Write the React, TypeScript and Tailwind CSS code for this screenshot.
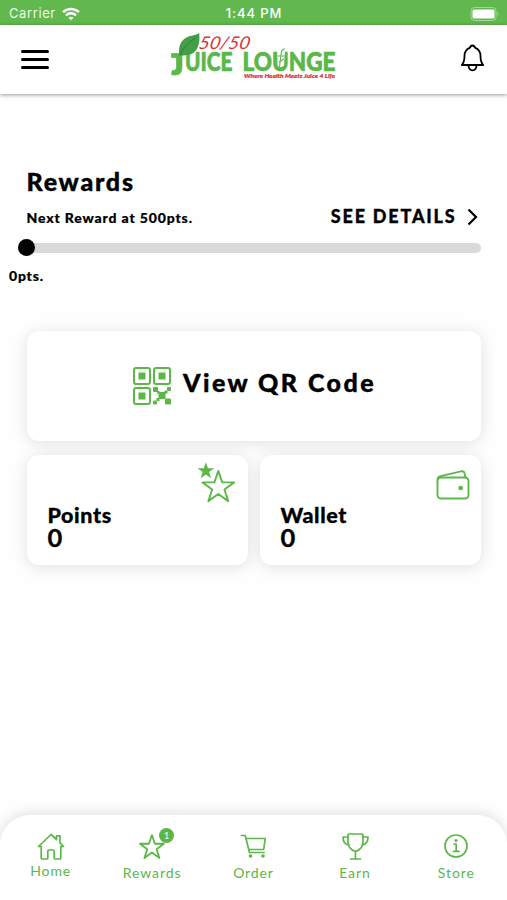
import type { ReactNode } from "react";

const GREEN = "#5cb749";

function Logo() {
    return (
        <svg className="overflow-visible" width="185" height="60" viewBox="0 0 185 60" aria-label="50/50 Juice Lounge">
            <text transform="translate(38 24) skewX(-12)" x="0" y="0" fontFamily="Lato, sans-serif" fontStyle="italic" fontSize="17.500" fill="#dc3038" textLength="51" lengthAdjust="spacingAndGlyphs">50/50</text>
            <g fontFamily="Lato, sans-serif" fontWeight="900" fill={GREEN} stroke={GREEN} strokeWidth="0.7">
                <path d="M11.500 28.500H22V42.500q0 7.500-6.500 7.500l-4-.3.700-4.200q4.300.6 4.300-4V32.500h-5z" />
                <text x="25" y="45.500" fontSize="26" textLength="47.500" lengthAdjust="spacingAndGlyphs">UICE</text>
                <text x="82.500" y="45.500" fontSize="26" textLength="93" lengthAdjust="spacingAndGlyphs">LOUNGE</text>
            </g>
            {/* straw and glass in the U */}
            <path d="M117.500 27h7.500l-1 14h-5.400z" fill="#fff" opacity=".85" />
            <path d="M119.500 42l2-16 3-2.500M117.500 31h7M119 37l5-3" fill="none" stroke={GREEN} strokeWidth="1.100" />
            <path d="M19.500 31c-2-10 2-17 9-19.500 4-1.300 8-1.500 10.700-3.500.8 8-.2 15-5.200 19.500-4 3.200-9 2.500-14.500 3.500z" fill="#43a047" />
            <path d="M20 30c3-7 8-12 15-17" fill="none" stroke="#2b7d38" strokeWidth="1" />
            <text x="84" y="52.500" fontFamily="Lato, sans-serif" fontWeight="900" fontStyle="italic" fontSize="5.800" fill="#dc3038" stroke="#dc3038" strokeWidth="0.2" textLength="91" lengthAdjust="spacingAndGlyphs">Where Health Meets Juice 4 Life</text>
        </svg>
    );
}

function StatusBar() {
    return (
        <div className="flex h-[25px] items-center justify-between bg-[#61b84e] pl-[9px] pr-[7px] pt-[3px] font-['Inter',sans-serif] text-[13px] text-white">
            <div className="flex w-[160px] items-center gap-[6px]">
                <span className="tracking-[0.600px] text-white/90">Carrier</span>
                <svg width="18" height="14" viewBox="0 0 18 14" fill="none" stroke="#fff" strokeWidth="2.500">
                    <path d="M1 5.200c4.500-4.400 11.500-4.400 16 0" />
                    <path d="M4 8.300c2.800-2.700 7.200-2.700 10 0" />
                    <path d="M6.500 10.800c1.500-1.300 3.500-1.300 5 0L9 13.300z" fill="#fff" stroke="none" />
                </svg>
            </div>
            <span className="mr-[1px] font-medium tracking-[0.900px]">1:44 PM</span>
            <div className="flex w-40 justify-end">
                <svg className="-mt-px" width="31" height="14" viewBox="0 0 31 14">
                    <rect x="2" y=".5" width="25" height="13" rx="3.500" fill="none" stroke="#a5d799" />
                    <rect x="3.500" y="2.500" width="22" height="9" rx="1.500" fill="#fff" />
                    <path d="M28.500 5q2 2 0 4z" fill="#a5d799" />
                </svg>
            </div>
        </div>
    );
}

function Header() {
    return (
        <header className="relative flex h-[69px] items-start justify-between bg-white pl-[21px] pr-[22px] shadow-[0_1px_4px_rgba(0,0,0,0.4)]">
            <button className="mt-[25px] flex flex-col gap-[5px]" aria-label="Menu">
                <span className="h-[3px] w-7 rounded-full bg-black" />
                <span className="h-[3px] w-7 rounded-full bg-black" />
                <span className="h-[3px] w-7 rounded-full bg-black" />
            </button>
            <div className="ml-[-5px]"><Logo /></div>
            <button className="mt-[19px]" aria-label="Notifications">
                <svg width="25" height="29" viewBox="0 0 25 29" fill="none" stroke="#000" strokeWidth="1.800" strokeLinejoin="round">
                    <path d="M12.500 1.500c1.400 0 2.200 1 2.500 2.200 4.200 1.800 5.500 4.600 5.500 8.300 0 4.500.5 6.500 2.700 9H1.800c2.200-2.500 2.700-4.500 2.700-9 0-3.700 1.300-6.500 5.500-8.300.3-1.200 1.100-2.200 2.500-2.200z" />
                    <path d="M8.500 21.500c.5 6.500 7.500 6.500 8 0" />
                </svg>
            </button>
        </header>
    );
}

const STAR = "M12 1l2.800 8.200h8.500l-6.900 5.100 2.700 8.300L12 17.500l-7.100 5.100 2.700-8.300L.7 9.200h8.500z";

function QrIcon() {
    return (
        <svg width="38" height="38" viewBox="0 0 38 38" fill={GREEN}>
            {[[1, 1], [21, 1], [1, 21]].map(([x, y]) => (
                <g key={`${x}-${y}`}>
                    <rect x={x} y={y} width="16" height="16" rx="2" fill="none" stroke={GREEN} strokeWidth="2" />
                    <rect x={x + 4.5} y={y + 4.5} width="7" height="7" />
                </g>
            ))}
            <rect x="20" y="20" width="5" height="5" rx="1" />
            <rect x="34" y="20" width="4" height="4" rx="1" />
            <rect x="25.500" y="25" width="7" height="7" />
            <rect x="24" y="24" width="2.500" height="2.500" />
            <rect x="31.500" y="23.500" width="3" height="3" />
            <rect x="32" y="31.500" width="6" height="6" rx="1" />
            <rect x="23.500" y="31" width="3" height="3" />
            <rect x="20" y="33.500" width="4" height="4" rx="1" />
        </svg>
    );
}

function PointsIcon() {
    return (
        <svg width="40" height="42" viewBox="0 0 40 42">
            <path d={STAR} transform="translate(0 -.5) scale(.74)" fill={GREEN} />
            <path d={STAR} transform="translate(4.500 7.500) scale(1.400)" fill="none" stroke={GREEN} strokeWidth="1.350" strokeLinejoin="round" />
        </svg>
    );
}

function WalletIcon() {
    return (
        <svg width="34" height="30" viewBox="0 0 34 30" fill="none" stroke={GREEN} strokeWidth="1.900" strokeLinejoin="round">
            <rect x="1.500" y="7.500" width="31" height="21" rx="3.500" />
            <path d="M1.500 10.500c0-2.500 1-4 3-4.300L25 1.300q3-.5 3.500 2l1 4" />
            <circle cx="24.700" cy="18" r="2.300" fill={GREEN} stroke="none" />
        </svg>
    );
}

function BalanceCard({ label, value, icon }: { label: string; value: number; icon: ReactNode }) {
    return (
        <div className="relative h-[110px] flex-1 rounded-[12px] bg-white pl-[21px] pt-[49px] shadow-[0_2px_16px_rgba(0,0,0,0.12)]">
            {icon}
            <p className="text-[21.500px] font-black leading-[22px] tracking-[0.600px] [-webkit-text-stroke:0.3px_black]">{label}</p>
            <p className="text-[25.500px] font-bold leading-[22px] [-webkit-text-stroke:0.3px_black]">{value}</p>
        </div>
    );
}

const navItems = [
    {
        label: "Home",
        icon: <path d="M1.500 14.500L14 2.500l5.500 5V3.800h3.500v7l3.500 3.700h-2.700V26q0 1-1 1h-4.600q-1 0-1-1v-7q0-1-1-1h-4.400q-1 0-1 1v7q0 1-1 1H5.200q-1 0-1-1V14.500z" />,
    },
    { label: "Rewards", icon: <path d={STAR} transform="translate(1.200 2) scale(1.060)" />, badge: 1 },
    {
        label: "Order",
        icon: (
            <>
                <path d="M2.500 3.500H6.200l4.300 17H25M7.200 6.500h19l-1.500 11H10" />
                <circle cx="11.500" cy="24" r="1.800" fill={GREEN} stroke="none" />
                <circle cx="24" cy="24" r="1.800" fill={GREEN} stroke="none" />
            </>
        ),
    },
    {
        label: "Earn",
        icon: (
            <>
                <path d="M7 3q0-1 1-1h13q1 0 1 1v7c0 5-3 8-7.500 9.500C10 18 7 15 7 10z" />
                <path d="M7 5H2c0 5 2 7.500 6 8M22 5h5c0 5-2 7.500-6 8M14.500 19.500V27M9.500 27h10" />
            </>
        ),
    },
    {
        label: "Store",
        icon: (
            <>
                <circle cx="14" cy="14" r="11" />
                <path d="M12 12h2.200v7M11.500 19.300h5.500" />
                <circle cx="14" cy="8.500" r="1.600" fill={GREEN} stroke="none" />
            </>
        ),
    },
];

function BottomNav() {
    return (
        <nav className="grid h-[85px] grid-cols-5 rounded-t-[30px] bg-white pt-[17px] shadow-[0_-3px_12px_rgba(0,0,0,0.11)]">
            {navItems.map((item) => (
                <div key={item.label} className="flex flex-col items-center text-[#5cb749]">
                    <div className="relative h-7 w-7">
                        <svg width="28" height="28" viewBox="0 0 28 28" fill="none" stroke={GREEN} strokeWidth="1.700" strokeLinejoin="round" strokeLinecap="round">
                            {item.icon}
                        </svg>
                        {item.badge && (
                            <span className="absolute -top-[4px] left-[21px] flex h-[15px] w-[15px] items-center justify-center rounded-full bg-[#5cb749] text-[9px] text-white">
                                {item.badge}
                            </span>
                        )}
                    </div>
                    <span className={item.label === "Home" ? "mt-[1px] text-[14px] leading-5 tracking-[0.900px]" : "mt-[3px] text-[14px] leading-5 tracking-[0.900px]"}>
                        {item.label}
                    </span>
                </div>
            ))}
        </nav>
    );
}

export default function App() {
    return (
        <div className="flex h-[900px] w-[507px] flex-col overflow-hidden bg-[#fefefe] font-['Lato',sans-serif] text-black">
            <StatusBar />
            <Header />
            <main className="flex flex-1 flex-col px-[26.500px] pt-[72px]">
                <h1 className="text-[25px] font-black leading-[30px] tracking-[1.750px] [-webkit-text-stroke:0.4px_black]">Rewards</h1>
                <div className="mt-[6px] flex h-[28px] items-center justify-between">
                    <p className="pt-[2px] text-[14px] font-black tracking-[0.850px] [-webkit-text-stroke:0.2px_black]">Next Reward at 500pts.</p>
                    <button className="flex items-center gap-[10px] pr-[3px] pt-px text-[18px] font-black tracking-[1.800px] [-webkit-text-stroke:0.3px_black]">
                        SEE DETAILS
                        <svg width="11" height="18" viewBox="0 0 11 18" fill="none" stroke="#000" strokeWidth="2.200">
                            <path d="M1.500 1.500L9 9l-7.500 7.500" />
                        </svg>
                    </button>
                </div>
                <div className="-ml-[9px] mt-[9px] flex h-[17px] items-center">
                    <span className="z-10 h-[17px] w-[17px] shrink-0 rounded-full bg-black" />
                    <span className="-ml-2 h-[10px] flex-1 rounded-full bg-[#d9d9d9]" />
                </div>
                <p className="-ml-[17.500px] mt-[10px] text-[14px] font-black leading-5 tracking-[0.800px] [-webkit-text-stroke:0.2px_black]">0pts.</p>
                <button className="mt-[45px] flex h-[110px] shrink-0 items-center justify-center gap-[12px] rounded-[12px] bg-white pl-[2px] shadow-[0_2px_16px_rgba(0,0,0,0.12)]">
                    <QrIcon />
                    <span className="-mt-[8px] text-[25px] font-black leading-[30px] tracking-[2.450px] [-webkit-text-stroke:0.4px_black]">View QR Code</span>
                </button>
                <div className="mt-[14px] flex gap-[12px]">
                    <BalanceCard label="Points" value={0} icon={<div className="absolute right-[11px] top-[7px]"><PointsIcon /></div>} />
                    <BalanceCard label="Wallet" value={0} icon={<div className="absolute right-[11px] top-[15px]"><WalletIcon /></div>} />
                </div>
            </main>
            <BottomNav />
        </div>
    );
}
